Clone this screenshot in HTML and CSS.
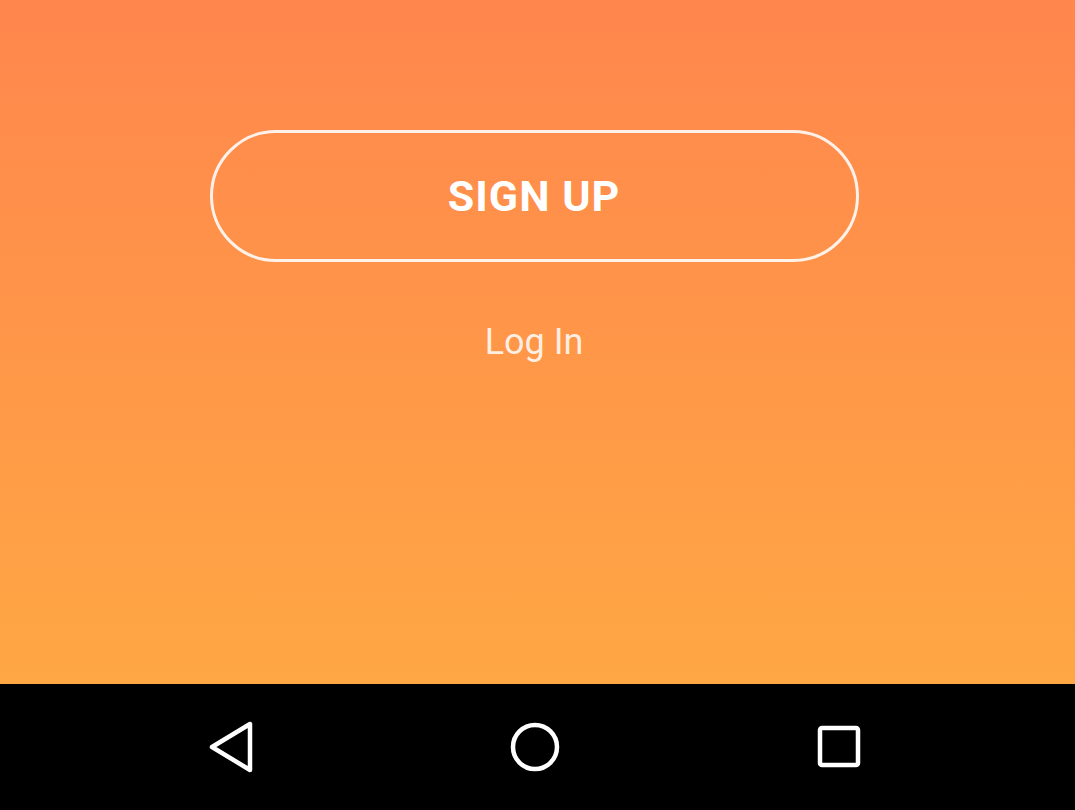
FILE: index.html
```html
<!DOCTYPE html>
<html>
<head>
<meta charset="utf-8">
<link rel="stylesheet" href="styles.css">
</head>
<body>
<main class="screen">
  <button class="signup">SIGN UP</button>
  <a class="login">Log In</a>
</main>
<nav class="navbar">
  <svg class="nav-icon nav-back" width="46" height="52" viewBox="0 0 46 52">
    <path d="M42 3 L42 49 L4 26 Z" fill="none" stroke="#fff" stroke-width="4.5" stroke-linejoin="round"/>
  </svg>
  <svg class="nav-icon nav-home" width="52" height="52" viewBox="0 0 52 52">
    <circle cx="26" cy="26" r="22" fill="none" stroke="#fff" stroke-width="4.5"/>
  </svg>
  <svg class="nav-icon nav-recent" width="46" height="46" viewBox="0 0 46 46">
    <rect x="4" y="4" width="38" height="37" rx="2" fill="none" stroke="#fff" stroke-width="4.5"/>
  </svg>
</nav>
</body>
</html>
```

FILE: styles.css
```css
html, body {
  margin: 0;
  padding: 0;
}
body {
  width: 1075px;
  height: 810px;
  overflow: hidden;
  font-family: Roboto, "Liberation Sans", sans-serif;
}
.screen {
  height: 684px;
  box-sizing: border-box;
  background: linear-gradient(to bottom, #ff864d 0%, #ffa744 100%);
  display: flex;
  flex-direction: column;
  align-items: center;
  padding: 130px 7px 0 0;
}
.signup {
  width: 649px;
  height: 132px;
  box-sizing: border-box;
  border: 3px solid rgba(255, 255, 255, 0.88);
  border-radius: 66px;
  background: transparent;
  color: #fff;
  font-family: Roboto, "Liberation Sans", sans-serif;
  font-weight: 700;
  font-size: 43px;
  letter-spacing: 1px;
  padding: 0;
}
.login {
  margin-top: 60px;
  color: rgba(255, 255, 255, 0.85);
  font-size: 36px;
  line-height: 40px;
}
.navbar {
  height: 126px;
  background: #000;
  display: flex;
  align-items: center;
  padding-left: 208px;
}
.nav-icon {
  display: block;
}
.nav-home { margin-left: 255px; }
.nav-recent { margin-left: 255px; }
```
